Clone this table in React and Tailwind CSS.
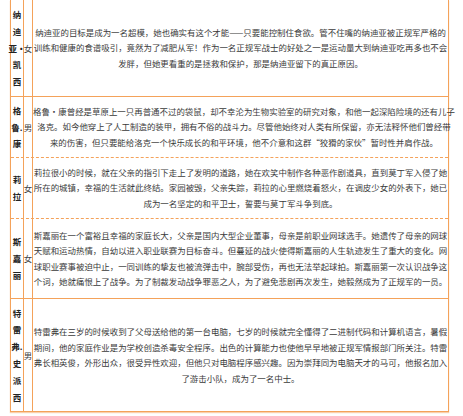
const rows = [
  {
    h: "h-[97px]",
    line: "border-solid",
    name: ["纳", "迪", "亚·", "凯", "西"],
    gender: "女",
    desc: [
      "纳迪亚的目标是成为一名超模，她也确实有这个才能——只要能控制住食欲。管不住嘴的纳迪亚被正规军严格的",
      "训练和健康的食谱吸引，竟然为了减肥从军！作为一名正规军战士的好处之一是运动量大到纳迪亚吃再多也不会",
      "发胖，但她更看重的是拯救和保护，那是纳迪亚留下的真正原因。",
    ],
  },
  {
    h: "h-[61px]",
    line: "border-dashed",
    name: ["格", "鲁.", "康"],
    gender: "男",
    desc: [
      "格鲁·康曾经是草原上一只再普通不过的袋鼠，却不幸沦为生物实验室的研究对象，和他一起深陷险境的还有儿子",
      "洛克。如今他穿上了人工制造的装甲，拥有不俗的战斗力。尽管他始终对人类有所保留，亦无法释怀他们曾经带",
      "来的伤害，但只要能给洛克一个快乐成长的和平环境，他不介意和这群“狡猾的家伙”暂时性并肩作战。",
    ],
  },
  {
    h: "h-[61px]",
    line: "border-dashed",
    name: ["莉", "拉"],
    gender: "女",
    desc: [
      "莉拉很小的时候，就在父亲的指引下走上了发明的道路，她在欢笑中制作各种恶作剧道具，直到莫丁军入侵了她",
      "所在的城镇，幸福的生活就此终结。家园被毁，父亲失踪，莉拉的心里燃烧着怒火，在调皮少女的外表下，她已",
      "成为一名坚定的和平卫士，誓要与莫丁军斗争到底。",
    ],
  },
  {
    h: "h-[80px]",
    line: "border-solid",
    name: ["斯", "嘉", "丽"],
    gender: "女",
    desc: [
      "斯嘉丽在一个富裕且幸福的家庭长大，父亲是国内大型企业董事，母亲是前职业网球选手。她遗传了母亲的网球",
      "天赋和运动热情，自幼以进入职业联赛为目标奋斗。但蔓延的战火使得斯嘉丽的人生轨迹发生了重大的变化。网",
      "球职业赛事被迫中止，一同训练的挚友也被流弹击中，腕部受伤，再也无法举起球拍。斯嘉丽第一次认识战争这",
      "个词，她就痛恨上了战争。为了制裁发动战争罪恶之人，为了避免悲剧再次发生，她毅然成为了正规军的一员。",
    ],
  },
  {
    h: "h-[113px]",
    line: "border-solid",
    name: ["特", "雷", "弗.", "史", "派", "西"],
    gender: "男",
    desc: [
      "特雷弗在三岁的时候收到了父母送给他的第一台电脑，七岁的时候就完全懂得了二进制代码和计算机语言，暑假",
      "期间，他的家庭作业是为学校创造杀毒安全程序。出色的计算能力也使他早早地被正规军情报部门所关注。特雷",
      "弗长相英俊，外形出众，很受异性欢迎，但他只对电脑程序感兴趣。因为崇拜同为电脑天才的马可，他报名加入",
      "了游击小队，成为了一名中士。",
    ],
  },
];

export default function App() {
  return (
    <div
      className="min-h-screen bg-white"
      style={{ fontFamily: '"Noto Sans CJK SC", "Noto Sans", sans-serif' }}
    >
      <div className="ml-[10px] w-[439px] border-x border-[#f4a25a] shadow-[0_1px_1px_rgba(244,162,90,0.5)]">
        {rows.map((r, i) => (
          <div key={i} className={`flex ${r.h} border-b ${r.line} border-[#f4a25a]`}>
            {/* name */}
            <div className="w-[13px] shrink-0 border-r border-solid border-[#f4a25a] flex flex-col items-center justify-center">
              {r.name.map((c, j) => (
                <div
                  key={j}
                  className="whitespace-nowrap text-[8.5px] leading-[16.8px] font-bold text-[#222]"
                >
                  {c}
                </div>
              ))}
            </div>
            {/* gender */}
            <div className="w-[9px] shrink-0 border-r border-solid border-[#f4a25a] flex items-center justify-center">
              <span className="whitespace-nowrap text-[8.45px] leading-[15px] text-[#444]">
                {r.gender}
              </span>
            </div>
            {/* description */}
            <div className="flex-1 flex flex-col items-center justify-center">
              {r.desc.map((t, j) => (
                <div
                  key={j}
                  className="whitespace-nowrap text-center text-[8.45px] leading-[15.5px] text-[#3a3a3a]"
                >
                  {t}
                </div>
              ))}
            </div>
          </div>
        ))}
      </div>
    </div>
  );
}
